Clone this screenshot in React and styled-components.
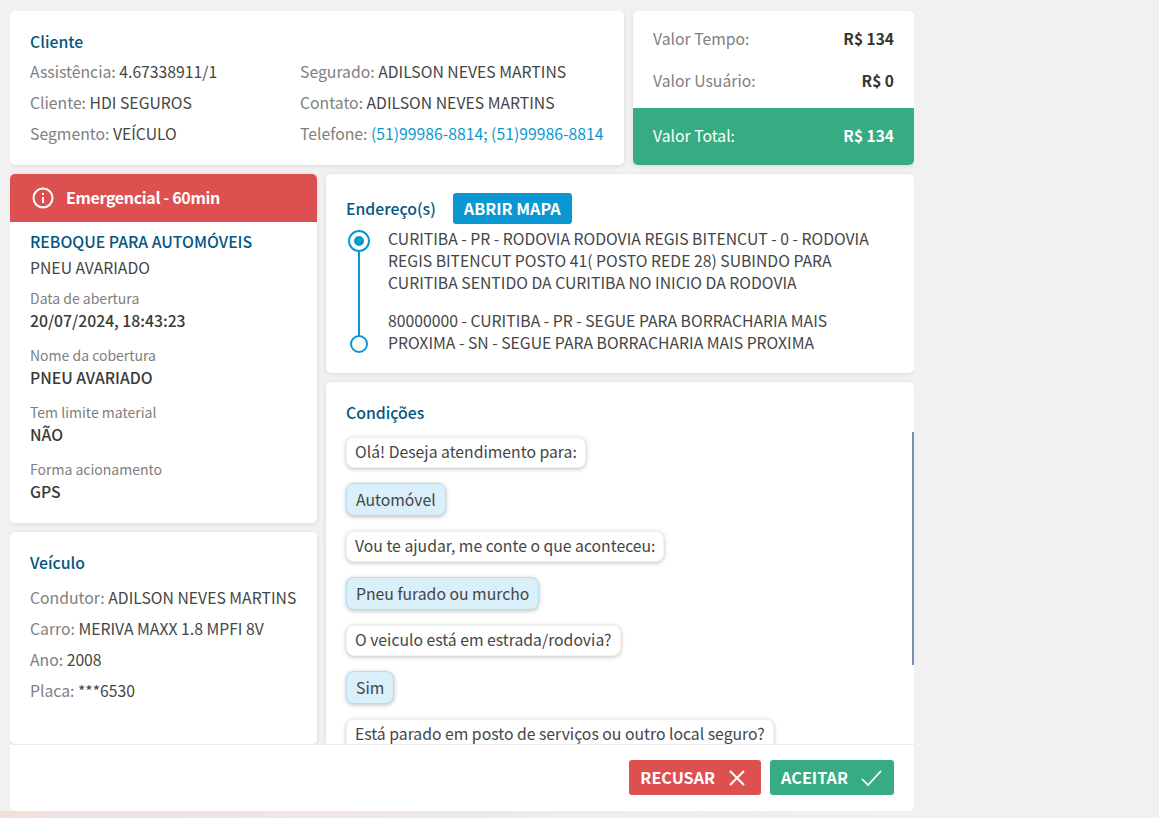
import React from "react";
import styled, { createGlobalStyle } from "styled-components";

const GlobalStyle = createGlobalStyle`
  html, body {
    margin: 0;
    padding: 0;
    background: #f1f1f1;
  }
  * {
    box-sizing: border-box;
  }
`;

const Page = styled.div`
  width: 1159px;
  height: 818px;
  overflow: hidden;
  padding: 11px 245px 0 10px;
  font-family: "Noto Sans CJK SC", "Noto Sans", sans-serif;
  font-size: 15.75px;
  color: #454545;
  background: linear-gradient(to bottom, #f1f1f1 811px, transparent 811px),
    linear-gradient(to right, #efe0dc, #f1f1f1 900px);
`;

const Content = styled.div`
  height: 733px;
  overflow: hidden;
  display: grid;
  grid-template-columns: 307px 588px;
  grid-template-rows: 154px 1fr;
  gap: 9px;
`;

const Card = styled.section`
  background: #fff;
  border-radius: 5px;
  box-shadow: 0 1px 4px rgba(0, 0, 0, 0.1);
`;

const TopRow = styled.div`
  grid-column: 1 / 3;
  display: grid;
  grid-template-columns: 614px 281px;
  gap: 9px;
`;

const ClientInfo = styled(Card)`
  padding: 20px 20px 0;
  display: grid;
  grid-template-columns: 270px 1fr;
  grid-template-rows: 25px repeat(3, 31px);
`;

const Title = styled.h2`
  margin: 0;
  padding-bottom: 1px;
  font-size: 15.8px;
  line-height: 21px;
  font-weight: 500;
  color: #04567f;
`;

const ClientTitle = styled(Title)`
  grid-column: 1 / 3;
`;

const Line = styled.div`
  line-height: 31px;
  white-space: nowrap;
`;

const Label = styled.span`
  color: #808080;
`;

const Phone = styled.span`
  color: #0b98d2;
`;

const ValueCard = styled(Card)`
  overflow: hidden;
  display: flex;
  flex-direction: column;
`;

const ValueRow = styled.div`
  height: 42px;
  padding: 0 20px;
  display: flex;
  align-items: center;
  justify-content: space-between;
`;

const ValueList = styled.div`
  height: 97px;
  padding-top: 6px;
`;

const Amount = styled.strong`
  font-size: 15.5px;
  font-weight: 700;
  color: #333;
`;

const TotalRow = styled(ValueRow)`
  flex: 1;
  padding-bottom: 3px;
  background: #37ab81;
  color: #fff;
  ${Amount} {
    color: #fff;
  }
`;

const LeftColumn = styled.div`
  display: flex;
  flex-direction: column;
  gap: 9px;
`;

const Alert = styled.div`
  height: 48px;
  padding: 0 22px 2px;
  display: flex;
  align-items: center;
  gap: 12px;
  background: #dd5050;
  color: #fff;
  font-size: 16px;
  font-weight: 700;
  letter-spacing: -0.35px;
  border-radius: 5px 5px 0 0;
  svg {
    margin-top: 2px;
  }
`;

const ServiceBody = styled.div`
  padding: 9px 20px 16px;
`;

const ServiceName = styled.div`
  margin-top: 3px;
  line-height: 24px;
  height: 23px;
`;

const Field = styled.div`
  padding-top: 9px;
  padding-bottom: 4px;
`;

const FieldLabel = styled.div`
  font-size: 14px;
  line-height: 21px;
  color: #808080;
`;

const FieldValue = styled.div`
  line-height: 23px;
  font-weight: 500;
  color: #3a3a3a;
`;

const VehicleCard = styled(Card)`
  flex: 1;
  padding: 20px 20px 0;
`;

const VehicleList = styled.div`
  margin-top: 8px;
`;

const RightColumn = styled.div`
  display: flex;
  flex-direction: column;
  gap: 9px;
  min-height: 0;
`;

const AddressCard = styled(Card)`
  height: 199px;
  padding: 19px 20px 0;
`;

const AddressHead = styled.div`
  display: flex;
  align-items: center;
  gap: 17px;
`;

const MapButton = styled.button`
  height: 31px;
  padding: 0 11px 2px;
  border: none;
  border-radius: 3px;
  background: #0b98d2;
  color: #fff;
  font: 700 16.2px "Noto Sans CJK SC", sans-serif;
`;

const Timeline = styled.div`
  margin-top: 5px;
  display: flex;
  gap: 16px;
`;

const TimelineIcon = styled.svg`
  flex: none;
  width: 25px;
  height: 126px;
  margin-left: 1px;
`;

const Addresses = styled.div`
  margin-top: -1px;
  line-height: 21.8px;
`;

const Address = styled.p`
  margin: 0 0 17px;
`;

const ConditionsCard = styled(Card)`
  flex: 1;
  position: relative;
  padding: 20px 20px 0;
  border-radius: 5px 5px 0 0;
  overflow: hidden;
`;

const ScrollThumb = styled.div`
  position: absolute;
  right: 0;
  top: 50px;
  width: 2px;
  height: 233px;
  background: #7d8eb5;
`;

const Chat = styled.div`
  margin-top: 13px;
  display: flex;
  flex-direction: column;
  align-items: flex-start;
  gap: 15px;
`;

const Bubble = styled.div`
  height: ${(p) => (p.$answer ? 33 : 31)}px;
  padding: 0 ${(p) => (p.$answer ? 9 : 8)}px;
  line-height: ${(p) => (p.$answer ? 31 : 27)}px;
  border-radius: 8px;
  background: ${(p) => (p.$answer ? "#d9eff9" : "#fff")};
  border: 1px solid ${(p) => (p.$answer ? "#b2dff0" : "#f2f2f2")};
  box-shadow: 0 1px 4px rgba(0, 0, 0, 0.25);
  white-space: nowrap;
`;

const Footer = styled.footer`
  height: 67px;
  padding-top: 15px;
  padding-right: 20px;
  display: flex;
  justify-content: flex-end;
  gap: 9px;
  background: #fff;
  border-top: 1px solid #ececec;
  border-radius: 0 0 5px 5px;
`;

const ActionButton = styled.button`
  height: 35px;
  padding: 0 ${(p) => p.$right}px 2px 11px;
  display: flex;
  align-items: center;
  gap: 13px;
  border: none;
  border-radius: 3px;
  background: ${(p) => p.$bg};
  color: #fff;
  font: 700 16.2px "Noto Sans CJK SC", sans-serif;
  svg {
    margin-top: 2px;
  }
`;

const InfoIcon = () => (
  <svg width="22" height="22" viewBox="0 0 22 22" fill="none" stroke="#fff" strokeWidth="2">
    <circle cx="11" cy="11" r="9.5" />
    <path d="M11 10v6M11 6v2" />
  </svg>
);

const App = () => (
  <Page>
    <GlobalStyle />
    <Content>
      <TopRow>
        <ClientInfo>
          <ClientTitle>Cliente</ClientTitle>
          <Line><Label>Assistência:</Label> 4.67338911/1</Line>
          <Line><Label>Segurado:</Label> ADILSON NEVES MARTINS</Line>
          <Line><Label>Cliente:</Label> HDI SEGUROS</Line>
          <Line><Label>Contato:</Label> ADILSON NEVES MARTINS</Line>
          <Line><Label>Segmento:</Label> VEÍCULO</Line>
          <Line><Label>Telefone:</Label> <Phone>(51)99986-8814; (51)99986-8814</Phone></Line>
        </ClientInfo>
        <ValueCard>
          <ValueList>
            <ValueRow><Label>Valor Tempo:</Label><Amount>R$ 134</Amount></ValueRow>
            <ValueRow><Label>Valor Usuário:</Label><Amount>R$ 0</Amount></ValueRow>
          </ValueList>
          <TotalRow><span>Valor Total:</span><Amount>R$ 134</Amount></TotalRow>
        </ValueCard>
      </TopRow>

      <LeftColumn>
        <Card>
          <Alert><InfoIcon />Emergencial - 60min</Alert>
          <ServiceBody>
            <Title>REBOQUE PARA AUTOMÓVEIS</Title>
            <ServiceName>PNEU AVARIADO</ServiceName>
            <Field>
              <FieldLabel>Data de abertura</FieldLabel>
              <FieldValue>20/07/2024, 18:43:23</FieldValue>
            </Field>
            <Field>
              <FieldLabel>Nome da cobertura</FieldLabel>
              <FieldValue>PNEU AVARIADO</FieldValue>
            </Field>
            <Field>
              <FieldLabel>Tem limite material</FieldLabel>
              <FieldValue>NÃO</FieldValue>
            </Field>
            <Field>
              <FieldLabel>Forma acionamento</FieldLabel>
              <FieldValue>GPS</FieldValue>
            </Field>
          </ServiceBody>
        </Card>
        <VehicleCard>
          <Title>Veículo</Title>
          <VehicleList>
            <Line><Label>Condutor:</Label> ADILSON NEVES MARTINS</Line>
            <Line><Label>Carro:</Label> MERIVA MAXX 1.8 MPFI 8V</Line>
            <Line><Label>Ano:</Label> 2008</Line>
            <Line><Label>Placa:</Label> ***6530</Line>
          </VehicleList>
        </VehicleCard>
      </LeftColumn>

      <RightColumn>
        <AddressCard>
          <AddressHead>
            <Title>Endereço(s)</Title>
            <MapButton>ABRIR MAPA</MapButton>
          </AddressHead>
          <Timeline>
            <TimelineIcon viewBox="0 0 25 126" fill="none" stroke="#0b98d2">
              <circle cx="12" cy="12" r="10" strokeWidth="2" />
              <circle cx="12" cy="12" r="5" fill="#0b98d2" stroke="none" />
              <path d="M12 22v85" strokeWidth="2" />
              <circle cx="12" cy="115" r="8" strokeWidth="2" fill="#fff" />
            </TimelineIcon>
            <Addresses>
              <Address>
                CURITIBA - PR - RODOVIA RODOVIA REGIS BITENCUT - 0 - RODOVIA
                <br />
                REGIS BITENCUT POSTO 41( POSTO REDE 28) SUBINDO PARA
                <br />
                CURITIBA SENTIDO DA CURITIBA NO INICIO DA RODOVIA
              </Address>
              <Address>
                80000000 - CURITIBA - PR - SEGUE PARA BORRACHARIA MAIS
                <br />
                PROXIMA - SN - SEGUE PARA BORRACHARIA MAIS PROXIMA
              </Address>
            </Addresses>
          </Timeline>
        </AddressCard>
        <ConditionsCard>
          <ScrollThumb />
          <Title>Condições</Title>
          <Chat>
            <Bubble>Olá! Deseja atendimento para:</Bubble>
            <Bubble $answer>Automóvel</Bubble>
            <Bubble>Vou te ajudar, me conte o que aconteceu:</Bubble>
            <Bubble $answer>Pneu furado ou murcho</Bubble>
            <Bubble>O veiculo está em estrada/rodovia?</Bubble>
            <Bubble $answer>Sim</Bubble>
            <Bubble>Está parado em posto de serviços ou outro local seguro?</Bubble>
          </Chat>
        </ConditionsCard>
      </RightColumn>
    </Content>
    <Footer>
      <ActionButton $bg="#dd5050" $right={15}>
        RECUSAR
        <svg width="18" height="18" viewBox="0 0 18 18" stroke="#fff" strokeWidth="2" fill="none">
          <path d="M2 2l14 14M16 2L2 16" />
        </svg>
      </ActionButton>
      <ActionButton $bg="#37ab81" $right={12}>
        ACEITAR
        <svg width="21" height="18" viewBox="0 0 21 18" stroke="#fff" strokeWidth="1.700" fill="none">
          <path d="M1 10l6 6L20 2" />
        </svg>
      </ActionButton>
    </Footer>
  </Page>
);

export default App;
